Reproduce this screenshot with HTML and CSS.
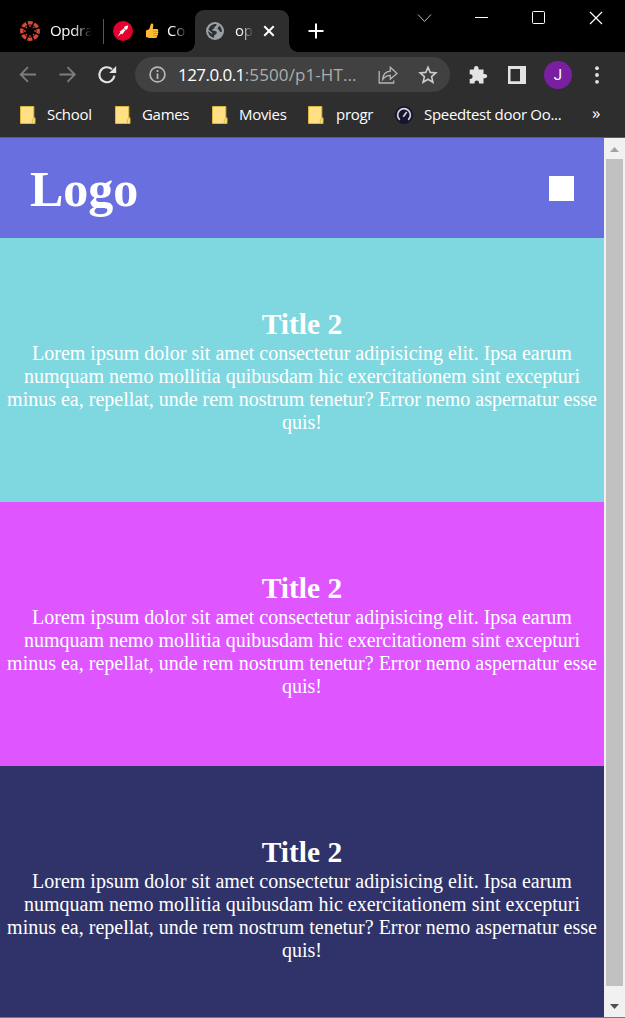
FILE: index.html
```html
<!DOCTYPE html>
<html lang="en">
<head>
<meta charset="utf-8">
<title>op</title>
<link rel="stylesheet" href="styles.css">
</head>
<body>
<div class="window">
  <div class="tabstrip">
    <div class="tab tab-first">
      <svg class="fav" width="20" height="20" viewBox="0 0 20 20"><circle cx="10" cy="10" r="8.2" fill="none" stroke="#d64a38" stroke-width="3.4" stroke-dasharray="4.9 1.54" stroke-dashoffset="2.45"/><g fill="#d64a38"><circle cx="10" cy="4.9" r=".9"/><circle cx="10" cy="15.1" r=".9"/><circle cx="4.9" cy="10" r=".9"/><circle cx="15.1" cy="10" r=".9"/><circle cx="6.4" cy="6.4" r=".9"/><circle cx="13.6" cy="6.4" r=".9"/><circle cx="6.4" cy="13.6" r=".9"/><circle cx="13.6" cy="13.6" r=".9"/></g></svg>
      <span class="tab-text fade-long">Opdra</span>
    </div>
    <div class="divider"></div>
    <div class="tab tab-second">
      <svg width="20" height="20" viewBox="0 0 20 20"><circle cx="10" cy="10" r="10" fill="#e1022f"/><path d="M4.5 15.7 7.2 11.6 6.5 10.8 10.5 7.8 11.6 5.4 15.3 4.3 14.4 8.1 12.1 9.5 9.2 13.4 8.4 12.6Z" fill="#fff"/><path d="m10.6 7.2 2.2 2.2" stroke="#e1022f" stroke-width=".8"/></svg>
      <svg class="thumb" width="14" height="16" viewBox="0 0 14 16"><path d="M1 7.4 4.2 6.2 5.8 1.2C6.1.1 8.6.3 8.3 2.5L7.8 6 12 6.1C13.6 6.2 13.7 7.8 12.8 8.2 13.8 8.8 13.5 10.1 12.7 10.4 13.5 11.2 13 12.3 12.2 12.5 12.5 14 11.7 15 10.5 15H4.5L1 14Z" fill="#fdbb35"/><path d="M8 8.3h4.8M8 10.5h4.5M8 12.6h4" stroke="#d18b1d" stroke-width=".7"/></svg>
      <span class="tab-text fade-short">Co</span>
    </div>
    <div class="tab tab-active">
      <svg width="18" height="18" viewBox="0 0 18 18"><circle cx="9" cy="9" r="9" fill="#9aa0a6"/><path d="M10.5 2.1C10.8 4 9.5 4.6 8.4 4.7V6.3C8.1 7.2 6.7 6.5 6.3 7.5 6.1 8.5 7.2 8.9 8.9 8.9 10.8 9 11 10 10.6 11.4 9.5 11.9 9.5 13 8.1 13.4V15.8C4.7 15.5 2.2 12.4 2.2 9.1L6.2 12.2 6.3 10.9 2.4 7.6C3.4 4.3 6.6 1.7 10.5 2.1ZM13 3.4C15 4.9 16.2 7.6 15.8 10L13.7 9.7C13.5 8.1 12.7 7.3 11.4 7.1 11 6 13.1 5.3 13 3.4Z" fill="#2e2e2e"/></svg>
      <span class="tab-text fade-short">op</span>
      <svg class="tab-close" width="12" height="12" viewBox="0 0 12 12"><path d="m1.3 1.3 9.4 9.4m0-9.4-9.4 9.4" stroke="#fff" stroke-width="2"/></svg>
    </div>
    <svg class="new-tab" width="16" height="16" viewBox="0 0 16 16"><path d="M8 .5v15M.5 8h15" stroke="#fff" stroke-width="2"/></svg>
    <svg class="controls" width="188" height="18" viewBox="0 0 188 18" fill="none" stroke="#fff"><path d="m1 4.5 6.5 7 6.5-7" stroke="#bbb"/><path d="M58 7.5h13"/><rect x="115.5" y="1.5" width="12" height="12" rx="1"/><path d="m173 2 12 12m0-12-12 12" stroke-width="1.2"/></svg>
  </div>

  <div class="toolbar">
    <svg class="nav" width="98" height="20" viewBox="0 0 98 20" fill="none" stroke-width="1.8"><path d="M17 9.5H2M9 2.2 1.7 9.5 9 16.8M40.5 9.5h15M48.5 2.2l7.3 7.3-7.3 7.3" stroke="#7d7d7d"/><path d="M95.3 10.7A7.5 7.5 0 1 1 93 4.3" stroke="#e3e3e3" stroke-width="2.1"/><path d="M97.2 1v7h-7z" fill="#e3e3e3"/></svg>
    <div class="omnibox">
      <svg class="info" width="17" height="17" viewBox="0 0 17 17"><circle cx="8.5" cy="8.5" r="7.4" fill="none" stroke="#b8b8b8" stroke-width="1.7"/><path d="M8.5 4v2M8.5 7.5V13" stroke="#b8b8b8" stroke-width="1.8"/></svg>
      <span class="url"><b>127.0.0.1</b>:5500/p1-HT...</span>
      <svg class="share" width="20" height="20" viewBox="0 0 20 20" fill="none" stroke="#b5b5b5" stroke-width="1.3"><path d="M1.2 6v12h14.5v-2.5"/><path d="M4.7 14.4C5 9.4 8 6.5 12.3 6.2V2.3L19 8.4 12.3 14V10.3C9 10.3 6.5 11.8 4.7 14.4Z"/></svg>
      <svg class="star" width="20" height="20" viewBox="0 0 20 20"><path d="m10 2.2 2.2 5.2 5.7.5-4.3 3.7 1.3 5.6L10 14.2l-4.9 3 1.3-5.6L2.1 7.9l5.7-.5Z" fill="none" stroke="#ccc" stroke-width="1.6"/></svg>
    </div>
    <svg class="puzzle" width="20" height="20" viewBox="0 0 20 20"><path d="M2.5 4.5H6C5.8 2.7 6.4 1 8.3 1S10.8 2.7 10.6 4.5H15.5V9C17.2 8.6 19.2 9.2 19.2 11.1S17.2 13.5 15.5 13.2V18.5H11C11.2 16.8 10.4 15.5 8.8 15.5S6.3 16.8 6.6 18.5H1.7V13.9C3.5 14.1 4.6 13.2 4.6 11.6S3.3 9.2 1.7 9.4V5.3Q1.7 4.5 2.5 4.5Z" fill="#e3e3e3"/></svg>
    <svg class="panel" width="18" height="18" viewBox="0 0 18 18"><path d="M0 0h18v18H0ZM2.5 3v12.3H12V3Z" fill="#e3e3e3" fill-rule="evenodd"/></svg>
    <div class="avatar">J</div>
    <svg class="dots" width="4" height="18" viewBox="0 0 4 18" fill="#e3e3e3"><circle cx="2" cy="2.2" r="1.9"/><circle cx="2" cy="9" r="1.9"/><circle cx="2" cy="15.8" r="1.9"/></svg>
  </div>

  <div class="bookmarks">
    <svg class="folder" width="17" height="18" viewBox="0 0 17 18"><path d="M.5.5h13.3v11.3h1.2v5.7H.5Z" fill="#ffe082" stroke="#dcb73e"/><path d="M12.3 17v-3.5l1.7-1.7" fill="none" stroke="#d0ac38" stroke-width=".8"/></svg>
    <span class="bm school">School</span>
    <svg class="folder" width="17" height="18" viewBox="0 0 17 18"><path d="M.5.5h13.3v11.3h1.2v5.7H.5Z" fill="#ffe082" stroke="#dcb73e"/><path d="M12.3 17v-3.5l1.7-1.7" fill="none" stroke="#d0ac38" stroke-width=".8"/></svg>
    <span class="bm games">Games</span>
    <svg class="folder" width="17" height="18" viewBox="0 0 17 18"><path d="M.5.5h13.3v11.3h1.2v5.7H.5Z" fill="#ffe082" stroke="#dcb73e"/><path d="M12.3 17v-3.5l1.7-1.7" fill="none" stroke="#d0ac38" stroke-width=".8"/></svg>
    <span class="bm movies">Movies</span>
    <svg class="folder" width="17" height="18" viewBox="0 0 17 18"><path d="M.5.5h13.3v11.3h1.2v5.7H.5Z" fill="#ffe082" stroke="#dcb73e"/><path d="M12.3 17v-3.5l1.7-1.7" fill="none" stroke="#d0ac38" stroke-width=".8"/></svg>
    <span class="bm progr">progr</span>
    <svg class="speed" width="18" height="18" viewBox="0 0 18 18"><circle cx="9" cy="9" r="9" fill="#15152d"/><path d="M4.8 13.8A6.4 6.4 0 1 1 13.2 13.8" fill="none" stroke="#d5d5e2" stroke-width="1.7"/><path d="m8.2 10.7 3.5-4.6" stroke="#d5d5e2" stroke-width="1.7"/></svg>
    <span class="bm speedtest">Speedtest door Oo...</span>
    <span class="more">»</span>
  </div>

  <div class="viewport">
    <main class="page">
      <header class="header"><h1>Logo</h1><div class="menu"></div></header>
      <section class="block cyan"><h2>Title 2</h2><p>Lorem ipsum dolor sit amet consectetur adipisicing elit. Ipsa earum numquam nemo mollitia quibusdam hic exercitationem sint excepturi minus ea, repellat, unde rem nostrum tenetur? Error nemo aspernatur esse quis!</p></section>
      <section class="block pink"><h2>Title 2</h2><p>Lorem ipsum dolor sit amet consectetur adipisicing elit. Ipsa earum numquam nemo mollitia quibusdam hic exercitationem sint excepturi minus ea, repellat, unde rem nostrum tenetur? Error nemo aspernatur esse quis!</p></section>
      <section class="block navy"><h2>Title 2</h2><p>Lorem ipsum dolor sit amet consectetur adipisicing elit. Ipsa earum numquam nemo mollitia quibusdam hic exercitationem sint excepturi minus ea, repellat, unde rem nostrum tenetur? Error nemo aspernatur esse quis!</p></section>
    </main>
    <div class="scrollbar">
      <svg width="9" height="5" viewBox="0 0 9 5"><path d="M0 5 4.5 0 9 5Z" fill="#a3a3a3"/></svg>
      <div class="thumb-bar"></div>
      <svg width="9" height="5" viewBox="0 0 9 5"><path d="M0 0h9L4.5 5Z" fill="#505050"/></svg>
    </div>
  </div>
</div>
</body>
</html>
```
FILE: styles.css
```css
* { box-sizing: border-box; }
body, h1, h2, p { margin: 0; }
body { overflow: hidden; background: #2e2e2e; }
svg { display: block; flex: none; }
.window { display: flex; flex-direction: column; width: 625px; height: 1018px; font-family: "Open Sans", "Noto Sans", sans-serif; color: #fff; border-bottom: 1px solid #77777c; }

.tabstrip { display: flex; height: 52px; background: #000; flex: none; }
.tab { display: flex; align-items: center; height: 42px; margin-top: 10px; flex: none; }
.tab-first { width: 103px; padding-left: 20px; }
.tab-text { font-size: 15px; line-height: 20px; padding-bottom: 2px; overflow: hidden; white-space: nowrap; letter-spacing: -.3px; }
.tab-first .tab-text { width: 42px; margin-left: 10px; }
.fade-long { -webkit-mask-image: linear-gradient(90deg, #000 55%, transparent); mask-image: linear-gradient(90deg, #000 55%, transparent); }
.fade-short { width: 19px; -webkit-mask-image: linear-gradient(90deg, #000 30%, transparent 105%); mask-image: linear-gradient(90deg, #000 30%, transparent 105%); }
.divider { width: 1px; height: 25px; margin-top: 19px; background: #55565a; }
.tab-second { width: 91px; padding-left: 9px; }
.thumb { margin: 0 8px 0 12px; }
.tab-active { position: relative; width: 94px; padding-left: 11px; background: #2e2e2e; border-radius: 9px 9px 0 0; }
.tab-active::before, .tab-active::after { content: ""; position: absolute; bottom: 0; width: 9px; height: 9px; }
.tab-active::before { left: -9px; background: radial-gradient(circle at 0 0, transparent 8.5px, #2e2e2e 9px); }
.tab-active::after { right: -9px; background: radial-gradient(circle at 100% 0, transparent 8.5px, #2e2e2e 9px); }
.tab-active .tab-text { margin-left: 11px; width: 18px; }
.tab-close { margin-left: 10px; }
.new-tab { margin: 23px 0 0 19px; }
.controls { margin: 10px 0 0 93px; }

.toolbar { display: flex; align-items: center; height: 45px; flex: none; background: #2e2e2e; }
.nav { margin-left: 19px; }
.omnibox { display: flex; align-items: center; width: 315px; height: 35px; margin-left: 18px; border-radius: 18px; background: #414141; flex: none; }
.info { margin-left: 14px; }
.url { width: 188px; margin-left: 12px; font-size: 17px; letter-spacing: .1px; white-space: nowrap; color: #adadad; }
.url b { font-weight: 400; color: #fff; letter-spacing: -.55px; }
.share { margin-left: 12px; }
.star { margin-left: 20px; }
.puzzle { margin-left: 18px; }
.panel { margin-left: 20px; }
.avatar { width: 28px; height: 28px; margin-left: 18px; border-radius: 50%; background: #7b1fa2; font-family: Roboto, sans-serif; font-size: 15px; line-height: 28px; text-align: center; flex: none; }
.dots { margin-left: 23px; }

.bookmarks { display: flex; align-items: center; height: 41px; padding: 0 0 4px 20px; background: #2e2e2e; border-bottom: 1px solid #5c5c66; flex: none; }
.bm { font-size: 15px; line-height: 20px; padding-bottom: 2px; letter-spacing: -.3px; white-space: nowrap; margin-left: 10px; flex: none; }
.school { width: 68px; }
.games { width: 70px; }
.movies { width: 69px; }
.progr { width: 49px; margin-left: 11px; }
.speed { margin-left: 10px; }
.speedtest { width: 168px; margin-left: 11px; }
.more { font-size: 17px; line-height: 20px; padding-bottom: 4px; }

.viewport { display: flex; flex: 1; min-height: 0; }
.page { width: 604px; overflow: hidden; font-family: "Liberation Serif", "Times New Roman", serif; }
.header { display: flex; align-items: center; justify-content: space-between; height: 100px; padding: 0 30px; background: #6a6fe0; }
.header h1 { padding-top: 2px; font-size: 50px; line-height: 57px; }
.menu { width: 25px; height: 25px; background: #fff; }
.block { height: 264px; padding: 69px 5px; text-align: center; }
.block h2 { font-size: 29.5px; line-height: 34px; }
.block p { padding-top: 1px; font-size: 20px; line-height: 23px; }
.cyan { background: #7fd8df; }
.pink { background: #df55ff; }
.navy { background: #303369; }
.scrollbar { display: flex; flex-direction: column; align-items: center; width: 21px; padding: 9px 0 8px; background: #f1f1f1; }
.thumb-bar { width: 17px; height: 827px; margin: 7px 0 18px; background: #c1c1c1; flex: none; }
```
